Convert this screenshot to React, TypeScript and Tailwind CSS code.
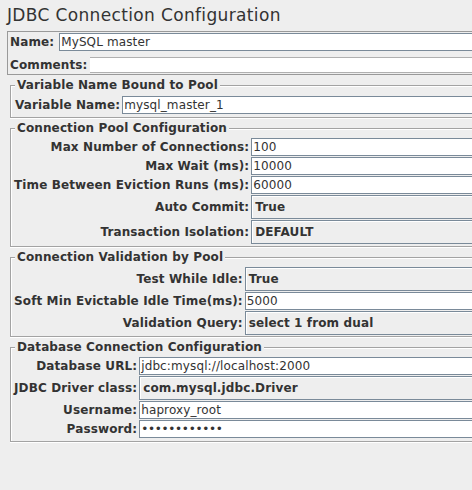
import { FC, ReactNode } from 'react';

type Row = {
  label: string;
  value: string;
  kind: 'text' | 'combo' | 'password';
};

const TextField: FC<{ value: string; kind: Row['kind'] }> = ({ value, kind }) => {
  if (kind === 'combo') {
    return (
      <div className="flex h-[24px] items-center border border-[#7a8a99] bg-[#eeeeee] pl-[3px] font-bold shadow-[inset_1px_1px_0_#ffffff] text-[#333333]">
        {value}
      </div>
    );
  }
  return (
    <div className="flex h-[18px] items-center border border-[#7a8a99] bg-white pl-[1px] text-[#333333]">
      {kind === 'password' ? <span className="tracking-[-0.3px]">{value}</span> : value}
    </div>
  );
};

const TitledPanel: FC<{ title: string; className?: string; children: ReactNode }> = ({
  title,
  className,
  children,
}) => (
  <div
    className={`relative ml-[10px] border border-[#a3a3a3] shadow-[inset_1px_1px_0_#ffffff,0_1px_0_#ffffff] ${className ?? ''}`}
  >
    <div className="absolute -top-[8px] left-[4px] bg-[#eeeeee] px-[2px] text-[12px] leading-[14px] font-bold text-[#333333]">
      {title}
    </div>
    {children}
  </div>
);

const FieldGrid: FC<{ rows: Row[] }> = ({ rows }) => (
  <div className="grid grid-cols-[auto_1fr] gap-x-[2px] gap-y-[1px]">
    {rows.map((row) => (
      <div key={row.label} className="contents">
        <div className="self-center text-right font-bold text-[#333333]">{row.label}</div>
        <TextField value={row.value} kind={row.kind} />
      </div>
    ))}
  </div>
);

const poolRows: Row[] = [
  { label: 'Max Number of Connections:', value: '100', kind: 'text' },
  { label: 'Max Wait (ms):', value: '10000', kind: 'text' },
  { label: 'Time Between Eviction Runs (ms):', value: '60000', kind: 'text' },
  { label: 'Auto Commit:', value: 'True', kind: 'combo' },
  { label: 'Transaction Isolation:', value: 'DEFAULT', kind: 'combo' },
];

const validationRows: Row[] = [
  { label: 'Test While Idle:', value: 'True', kind: 'combo' },
  { label: 'Soft Min Evictable Idle Time(ms):', value: '5000', kind: 'text' },
  { label: 'Validation Query:', value: 'select 1 from dual', kind: 'combo' },
];

const dbRows: Row[] = [
  { label: 'Database URL:', value: 'jdbc:mysql://localhost:2000', kind: 'text' },
  { label: 'JDBC Driver class:', value: 'com.mysql.jdbc.Driver', kind: 'combo' },
  { label: 'Username:', value: 'haproxy_root', kind: 'text' },
  { label: 'Password:', value: '••••••••••••', kind: 'password' },
];

const App: FC = () => {
  return (
    <div
      className="h-[490px] w-[472px] overflow-hidden bg-[#eeeeee] text-[12px] leading-[14px] tracking-[0.12px] text-[#333333]"
      style={{ fontFamily: '"DejaVu Sans", sans-serif' }}
    >
      <div className="w-[540px]">
        <h1 className="h-[31px] pl-[7px] pt-[6px] text-[17px] leading-[19px] font-normal tracking-[0.35px]">
          JDBC Connection Configuration
        </h1>

        <div className="ml-[7px] border border-[#999999] px-[2px] pt-[1px] pb-[1px]">
          <div className="flex items-center gap-[5px]">
            <span className="font-bold">Name:</span>
            <div className="flex-1">
              <TextField value="MySQL master" kind="text" />
            </div>
          </div>
          <div className="mt-[6px] flex items-center gap-[2px]">
            <span className="font-bold">Comments:</span>
            <div className="h-[16px] flex-1 border-y border-[#b0b0b0] bg-white" />
          </div>
        </div>

        <TitledPanel title="Variable Name Bound to Pool" className="mt-[10px] pt-[10px] pb-[3px] pl-[4px]">
          <div className="flex items-center gap-[2px]">
            <span className="font-bold">Variable Name:</span>
            <div className="flex-1">
              <TextField value="mysql_master_1" kind="text" />
            </div>
          </div>
        </TitledPanel>

        <TitledPanel title="Connection Pool Configuration" className="mt-[10px] pt-[9px] pb-[2px] pl-[3px]">
          <FieldGrid rows={poolRows} />
        </TitledPanel>

        <TitledPanel title="Connection Validation by Pool" className="mt-[10px] pt-[9px] pb-[1px] pl-[3px]">
          <FieldGrid rows={validationRows} />
        </TitledPanel>

        <TitledPanel title="Database Connection Configuration" className="mt-[10px] pt-[9px] pb-[3px] pl-[3px]">
          <FieldGrid rows={dbRows} />
        </TitledPanel>
      </div>
    </div>
  );
};

export default App;
